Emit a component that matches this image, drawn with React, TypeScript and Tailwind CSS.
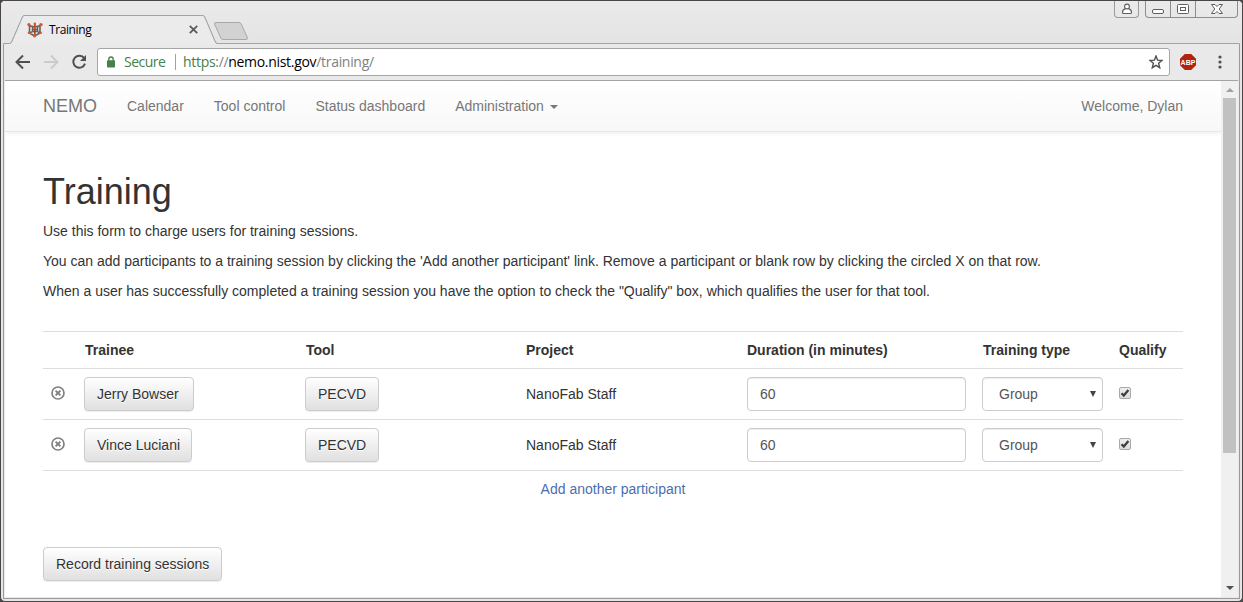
import React from "react";

const navLinks = ["Calendar", "Tool control", "Status dashboard"];
const rows = [
  { trainee: "Jerry Bowser", width: "w-[110px]", tool: "PECVD", project: "NanoFab Staff", duration: "60" },
  { trainee: "Vince Luciani", width: "w-[108px]", tool: "PECVD", project: "NanoFab Staff", duration: "60" },
];
const headings = [
  { name: "Trainee", pad: "pl-[9px]" },
  { name: "Tool", pad: "pl-[9px]" },
  { name: "Project", pad: "pl-2" },
  { name: "Duration (in minutes)", pad: "pl-2" },
  { name: "Training type", pad: "pl-[9px]" },
  { name: "Qualify", pad: "pl-2" },
];
const columns = "grid grid-cols-[33px_221px_221px_221px_235px_137px_72px] border-t border-[#ddd]";

function Favicon() {
  return (
    <svg width="16" height="16" viewBox="0 0 16 16" className="shrink-0">
      <g fill="none" stroke="#6b625e" strokeWidth="1.600">
        <path d="M2 3.500 5.500 4.500H10L14 3.500M2.500 3.500V11L7.600 14 13 11V3.500M5.500 4.500V10M10.500 4.500V10M2.500 11l3-1.500h5L13 11M5 7.500H11" />
      </g>
      <path d="M7.800 2V14" stroke="#8c4a35" strokeWidth="1.600" />
      <g fill="#e0562a">
        <circle cx="1.900" cy="2.600" r="1.600" />
        <circle cx="7.800" cy="1.800" r="1.300" />
        <circle cx="14" cy="2.600" r="1.700" />
        <circle cx="7.800" cy="5.700" r="1.500" />
        <circle cx="2" cy="10.800" r="1.300" />
        <circle cx="13.700" cy="10.800" r="1.300" />
        <circle cx="7.600" cy="13.800" r="1.700" />
      </g>
    </svg>
  );
}

function TabStrip() {
  return (
    <div className="relative flex h-[43px] shrink-0 justify-between bg-gradient-to-b from-[#eaeaea] to-[#e4e4e4]">
      <svg width="1241" height="43" viewBox="1 1 1241 43" className="absolute left-0 top-0">
        <path d="M3.500 44V43.500H9.500Q11 43.500 11.700 42L22.500 17Q23.200 15.500 24.500 15.500H202.500Q204 15.500 204.700 17L215.300 42Q216 43.500 217.500 43.500H1239.500V44" fill="none" stroke="#a3a3a3" />
        <path d="M10 44 11.700 42 22.500 17Q23.200 15.500 24.500 16H202.500Q204 15.500 204.700 17L215.300 42 217 44Z" fill="#ebebeb" />
        <path d="M9.500 43.500Q11 43.500 11.700 42L22.500 17Q23.200 15.500 24.500 15.500H202.500Q204 15.500 204.700 17L215.300 42Q216 43.500 217.500 43.500" fill="none" stroke="#a3a3a3" />
        <path d="M216 22.500H239Q240.500 22.500 241.200 24L247.300 37.500Q248 39.500 246 39.500H223Q221.500 39.500 220.800 38L214.500 24Q214 22.500 216 22.500Z" fill="#d2d2d2" stroke="#a8a8a8" />
      </svg>
      <div className="relative mt-[14px] flex h-[28px] w-[200px] items-center pl-[26px] pt-px">
        <Favicon />
        <span className="ml-[6px] font-['Open_Sans',sans-serif] text-[12px] leading-4 tracking-[-0.4px] text-black">Training</span>
        <svg width="9" height="9" viewBox="0 0 9 9" className="ml-auto mr-[3px]">
          <path d="M.8.8 8.200 8.200M8.200.8.8 8.200" stroke="#5a5a5a" strokeWidth="1.800" />
        </svg>
      </div>
      <div className="relative mr-[4px] flex h-[17px]">
        <div className="mr-[6px] flex w-[25px] justify-center rounded-b-[4px] border border-t-0 border-[#9a9a9a]">
          <svg width="12" height="14" viewBox="0 0 12 14" fill="#fff" stroke="#5f5f5f" strokeWidth="1.100">
            <path d="M4.500 7.600Q1.500 8.500 1.500 11.200Q1.500 12.500 2.500 12.500H9.500Q10.500 12.500 10.500 11.200Q10.500 8.500 7.500 7.600" />
            <circle cx="6" cy="5.500" r="2.400" />
          </svg>
        </div>
        <div className="flex w-[93px] rounded-b-[4px] border border-t-0 border-[#8d8d8d]">
          <div className="flex w-[25px] justify-center border-r border-[#8d8d8d]">
            <svg width="12" height="14" viewBox="0 0 12 14" fill="#fff" stroke="#5f5f5f"><rect x=".5" y="8.500" width="11" height="4" rx="1.500" /></svg>
          </div>
          <div className="flex w-[25px] justify-center border-r border-[#8d8d8d]">
            <svg width="12" height="14" viewBox="0 0 12 14" fill="#fff" stroke="#5f5f5f"><rect x=".5" y="3.500" width="11" height="9" rx="1" /><rect x="3.500" y="6.500" width="5" height="3" /></svg>
          </div>
          <div className="flex flex-1 justify-center">
            <svg width="12" height="14" viewBox="0 0 12 14" fill="#fff" stroke="#5f5f5f"><path d="M.5 3.500H4L6 5.500 8 3.500H11.500L8.200 8 11.500 12.500H8L6 10.500 4 12.500H.5L3.800 8Z" /></svg>
          </div>
        </div>
      </div>
    </div>
  );
}

function Toolbar() {
  return (
    <div className="flex h-[37px] shrink-0 items-center border-b border-[#a3a3a3] bg-[#e9e9e9] pl-[10px]">
      <svg width="16" height="16" viewBox="0 0 16 16" fill="none" stroke="#505050" strokeWidth="2"><path d="M15 8H2M8 1.500 1.500 8 8 14.500" /></svg>
      <svg width="16" height="16" viewBox="0 0 16 16" fill="none" stroke="#cbcbcb" strokeWidth="2" className="ml-[12px]"><path d="M1 8H14M8 1.500 14.500 8 8 14.500" /></svg>
      <svg width="16" height="16" viewBox="0 0 16 16" fill="none" stroke="#505050" strokeWidth="2" className="ml-[12px]">
        <path d="M13.200 4.200A6 6 0 1 0 14 9.700" /><path d="M15 1V7H9Z" fill="#505050" stroke="none" />
      </svg>
      <div className="ml-[10px] flex h-[28px] w-[1073px] items-center rounded-[3px] border border-[#a5a5a5] bg-white font-['Open_Sans',sans-serif] text-[14px] leading-5">
        <svg width="8" height="12" viewBox="0 0 8 12" className="ml-[9px]"><path d="M1.800 5V3.200a2.200 2.200 0 0 1 4.400 0V5" fill="none" stroke="#45814a" strokeWidth="1.300" /><rect y="4.300" width="8" height="7.200" rx=".8" fill="#45814a" /></svg>
        <span className="ml-[9px] w-[42px] whitespace-nowrap tracking-[-0.5px] text-[#45814a]">Secure</span>
        <span className="ml-[9px] h-4 w-px bg-[#a0a0a0]" />
        <span className="ml-[7px] whitespace-nowrap tracking-[-0.31px] text-[#808080]"><span className="text-[#45814a]">https</span>://<span className="text-black">nemo.nist.gov</span>/training/</span>
        <svg width="14" height="14" viewBox="0 0 14 14" fill="none" stroke="#505050" strokeWidth="1.400" className="ml-auto mr-[6px]"><path d="M7 1 8.600 5.200 13 5.500 9.600 8.300 10.700 12.700 7 10.300 3.300 12.700 4.400 8.300 1 5.500 5.400 5.200Z" /></svg>
      </div>
      <div className="ml-[10px] flex h-4 w-4 items-center justify-center bg-[#b3240f] font-['Liberation_Sans',sans-serif] text-[7px] font-bold leading-none text-white [clip-path:polygon(30%_0,70%_0,100%_30%,100%_70%,70%_100%,30%_100%,0_70%,0_30%)]">ABP</div>
      <svg width="4" height="14" viewBox="0 0 4 14" fill="#505050" className="ml-[22px]"><circle cx="2" cy="2" r="1.600" /><circle cx="2" cy="7" r="1.600" /><circle cx="2" cy="12" r="1.600" /></svg>
    </div>
  );
}

function Button({ children, width = "" }: { children: React.ReactNode; width?: string }) {
  return (
    <button className={"h-[34px] whitespace-nowrap rounded-[4px] border border-[#ccc] bg-gradient-to-b from-white to-[#e0e0e0] pl-3 pr-[11px] text-left text-[#333] shadow-[inset_0_1px_0_rgba(255,255,255,.15),0_1px_1px_rgba(0,0,0,.075)] [text-shadow:0_1px_0_#fff] " + width}>
      {children}
    </button>
  );
}

function Row({ row }: { row: (typeof rows)[number] }) {
  return (
    <div className={columns}>
      <div className="pl-2 pt-[17px]">
        <svg width="14" height="14" viewBox="0 0 14 14" fill="none" stroke="#808080"><circle cx="7" cy="7" r="6" strokeWidth="1.700" /><path d="M4.600 4.600 9.400 9.400M9.400 4.600 4.600 9.400" strokeWidth="2" /></svg>
      </div>
      <div className="p-2"><Button width={row.width}>{row.trainee}</Button></div>
      <div className="p-2"><Button width="w-[74px]">{row.tool}</Button></div>
      <div className="px-2 py-[15px]">{row.project}</div>
      <div className="p-2">
        <input defaultValue={row.duration} className="block h-[34px] w-full rounded-[4px] border border-[#ccc] px-3 text-[#555] shadow-[inset_0_1px_1px_rgba(0,0,0,.075)]" />
      </div>
      <div className="p-2">
        <div className="flex h-[34px] items-center justify-between rounded-[4px] border border-[#ccc] pl-4 pr-[6px] text-[#555] shadow-[inset_0_1px_1px_rgba(0,0,0,.075)]">
          Group
          <svg width="6" height="6" viewBox="0 0 6 6"><path d="M0 0H6L3 6Z" fill="#444" /></svg>
        </div>
      </div>
      <div className="pl-2 pt-[18px]">
        <div className="flex h-3 w-3 items-center justify-center rounded-[2px] border border-[#a9a9a9] bg-gradient-to-b from-[#eee] to-[#ddd]">
          <svg width="10" height="10" viewBox="0 0 10 10"><path d="M1.500 5.200 3.800 7.500 8.400 2" fill="none" stroke="#3f3f3f" strokeWidth="2.300" /></svg>
        </div>
      </div>
    </div>
  );
}

function Page() {
  return (
    <div className="flex w-[1216px] flex-col bg-white">
      <nav className="flex h-[51px] shrink-0 items-center border-b border-[#e7e7e7] bg-gradient-to-b from-white to-[#f8f8f8] px-[38px] text-[#777] shadow-[0_1px_5px_rgba(0,0,0,.075)]">
        <span className="w-[84px] text-[18px] leading-5">NEMO</span>
        {navLinks.map((link) => <span key={link} className="mr-[30px]">{link}</span>)}
        <span>Administration</span>
        <svg width="8" height="4" viewBox="0 0 8 4" className="ml-[6px] mt-[2px]"><path d="M0 0H8L4 4Z" fill="#777" /></svg>
        <span className="ml-auto">Welcome, Dylan</span>
      </nav>
      <main className="px-[38px] pt-10">
        <h1 className="mb-[9px] text-[36px] leading-[40px]">Training</h1>
        <p className="mb-[10px]">Use this form to charge users for training sessions.</p>
        <p className="mb-[10px]">You can add participants to a training session by clicking the 'Add another participant' link. Remove a participant or blank row by clicking the circled X on that row.</p>
        <p>When a user has successfully completed a training session you have the option to check the "Qualify" box, which qualifies the user for that tool.</p>
        <div className="mt-[30px]">
          <div className={columns + " font-bold"}>
            <span />
            {headings.map(({ name, pad }) => (
              <span key={name} className={"whitespace-nowrap py-2 " + pad}>{name}</span>
            ))}
          </div>
          {rows.map((row) => <Row key={row.trainee} row={row} />)}
          <div className="border-t border-[#ddd] p-2 text-center"><a className="text-[#4a6fae]">Add another participant</a></div>
        </div>
        <div className="mt-[40px]"><Button width="w-[179px]">Record training sessions</Button></div>
      </main>
    </div>
  );
}

export default function App() {
  return (
    <div className="h-[602px] w-[1243px] bg-[#4a4648]">
      <div className="flex h-full flex-col overflow-hidden rounded-[5px] border border-[#4a4648] bg-[#e6e6e6]">
        <TabStrip />
        <div className="mx-[2px] mb-[2px] flex min-h-0 flex-1 flex-col border border-t-0 border-[#9b9b9b] bg-[#e9e9e9] px-px pb-px">
          <Toolbar />
          <div className="flex min-h-0 flex-1 overflow-hidden font-['Liberation_Sans',Arial,sans-serif] text-[14px] leading-5 text-[#333]">
            <Page />
            <div className="flex w-[17px] flex-col items-center bg-[#f0f0f0]">
              <div className="flex h-[17px] items-center"><svg width="8" height="4" viewBox="0 0 8 4"><path d="M0 4H8L4 0Z" fill="#a0a0a0" /></svg></div>
              <div className="h-[355px] w-[13px] bg-[#c1c1c1]" />
              <div className="mt-auto flex h-[19px] items-center"><svg width="8" height="4" viewBox="0 0 8 4"><path d="M0 0H8L4 4Z" fill="#505050" /></svg></div>
            </div>
          </div>
        </div>
      </div>
    </div>
  );
}
